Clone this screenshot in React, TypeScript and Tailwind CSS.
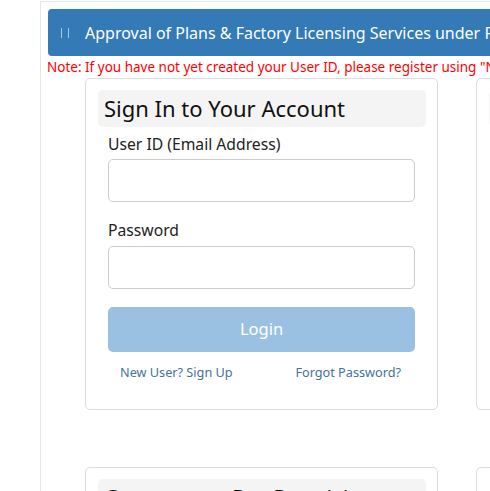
export default function App() {
  const font = { fontFamily: '"Noto Sans", "Open Sans", sans-serif' };
  return (
    <div className="w-[490px] h-[491px] overflow-hidden bg-white" style={font}>
      <div className="ml-[40px] mt-[1px] border-l border-t border-[#e6e6e6] pl-[7px] pt-[7px] w-[640px] h-[600px]">
        <div className="h-[47px] w-[600px] rounded-[4px] bg-[#337ab7] flex items-center pl-[13px]">
          <span className="flex gap-[6px] mr-[16px] mt-[1px]">
            <span className="w-[1px] h-[10px] bg-[#a9c6e2]"></span>
            <span className="w-[1px] h-[10px] bg-[#a9c6e2]"></span>
          </span>
          <span className="text-white text-[16px] whitespace-nowrap">Approval of Plans &amp; Factory Licensing Services under Factories Act</span>
        </div>
        <div className="text-[#ff0000] text-[13.5px] leading-[20px] -ml-[1px] mt-[1px] whitespace-nowrap">
          Note: If you have not yet created your User ID, please register using "New User? Sign Up"
        </div>
        <div className="ml-[37px] mt-[1px] flex gap-[38px]">
          <div className="w-[353px] shrink-0 flex flex-col gap-[57px]">
            <div className="h-[332px] border border-[#dcdcdc] rounded-[5px] pl-[12px] pr-[11px] pt-[11px]">
              <div className="h-[37px] bg-[#f4f4f4] rounded-[5px] flex items-center px-[6px] text-[22px] text-[#111]">
                Sign In to Your Account
              </div>
              <div className="pl-[10px] pr-[11px]">
                <div className="mt-[6px] text-[15.7px] text-[#222] leading-[22px]">User ID (Email Address)</div>
                <div className="mt-[4px] h-[43px] border border-[#cccccc] rounded-[5px]"></div>
                <div className="mt-[17px] text-[15.7px] text-[#222] leading-[22px]">Password</div>
                <div className="mt-[5px] h-[43px] border border-[#cccccc] rounded-[5px]"></div>
                <div className="mt-[18px] h-[45px] rounded-[5px] bg-[#9ac1e2] flex items-center justify-center text-white text-[16.5px]">
                  Login
                </div>
                <div className="mt-[11px] flex justify-between pl-[12px] pr-[14px] text-[12.7px] text-[#44719e]">
                  <span>New User? Sign Up</span>
                  <span>Forgot Password?</span>
                </div>
              </div>
            </div>
            <div className="h-[200px] border border-[#dcdcdc] rounded-[5px] pl-[12px] pr-[11px] pt-[11px]">
              <div className="h-[37px] bg-[#f4f4f4] rounded-[5px] flex items-center px-[6px] text-[22px] text-[#111]">
                Component Pre-Requisites
              </div>
            </div>
          </div>
          <div className="w-[200px] shrink-0 flex flex-col gap-[57px]">
            <div className="h-[332px] border border-[#dcdcdc] rounded-[5px] px-[12px] pt-[11px]">
              <div className="h-[37px] bg-[#f4f4f4] rounded-[5px]"></div>
            </div>
            <div className="h-[200px] border border-[#dcdcdc] rounded-[5px]"></div>
          </div>
        </div>
      </div>
    </div>
  );
}
